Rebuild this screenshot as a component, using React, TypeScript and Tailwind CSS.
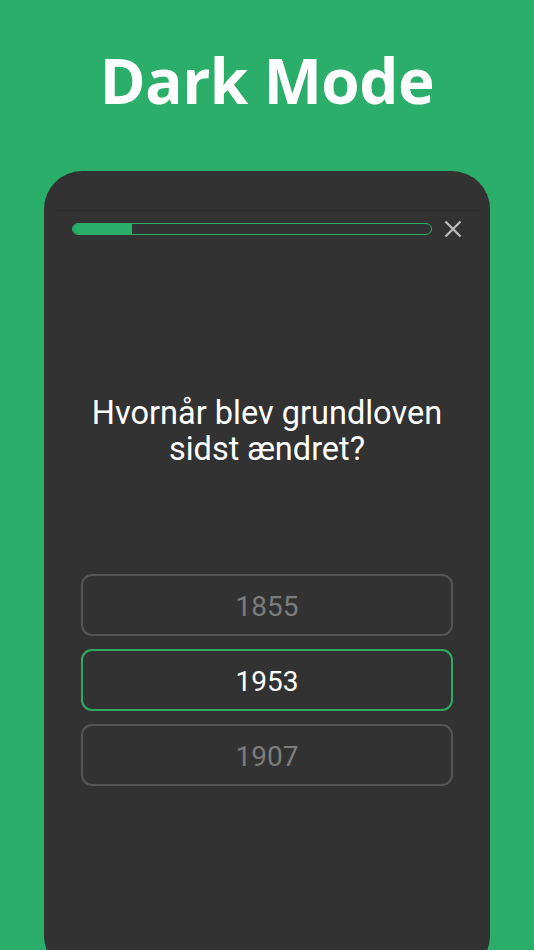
export default function App() {
  const answers = [
    { label: "1855", selected: false },
    { label: "1953", selected: true },
    { label: "1907", selected: false },
  ];

  return (
    <div className="w-[534px] h-[950px] overflow-hidden bg-[#2aae69] flex flex-col items-center">
      {/* Headline */}
      <h1 className="mt-[38px] h-[84px] text-white text-[62px] leading-[84px] font-bold font-['Open_Sans',sans-serif] tracking-[-0.5px]">
        Dark Mode
      </h1>

      {/* Phone screen */}
      <div className="mt-[49px] w-[446px] h-[803px] shrink-0 bg-[#323232] rounded-[38px] flex flex-col font-['Roboto',sans-serif]">
        <div className="h-[39px] shrink-0" />
        <div className="mx-[11px] h-px bg-[#2a2a2a]" />

        {/* Progress + close */}
        <div className="flex items-center pl-[28px] pr-[28px] mt-[11px] h-[14px]">
          <div className="flex-1 h-[12px] rounded-full border border-[#2aae69] overflow-hidden">
            <div className="w-[59px] h-full bg-[#2aae69]" />
          </div>
          <button className="ml-[12px] w-[18px] h-[18px] flex items-center justify-center">
            <svg width="18" height="18" viewBox="0 0 18 18" fill="none">
              <path d="M1.5 1.5 L16.5 16.5 M16.5 1.5 L1.5 16.5" stroke="#bdbdbd" strokeWidth="2.2" />
            </svg>
          </button>
        </div>

        {/* Question */}
        <p className="mt-[159px] px-[20px] text-center text-white text-[32.5px] leading-[36px]">
          Hvornår blev grundloven
          <br />
          sidst ændret?
        </p>

        {/* Answers */}
        <div className="mt-[107px] flex flex-col gap-[13px] px-[37px]">
          {answers.map((a) =>
            a.selected ? (
              <div
                key={a.label}
                className="h-[62px] pt-[3px] rounded-[11px] border-2 border-[#2eaa64] flex items-center justify-center text-white text-[28px]"
              >
                {a.label}
              </div>
            ) : (
              <div
                key={a.label}
                className="h-[62px] pt-[3px] rounded-[11px] border-2 border-[#555555] flex items-center justify-center text-[#7c7c7c] text-[28px]"
              >
                {a.label}
              </div>
            )
          )}
        </div>
      </div>
    </div>
  );
}
